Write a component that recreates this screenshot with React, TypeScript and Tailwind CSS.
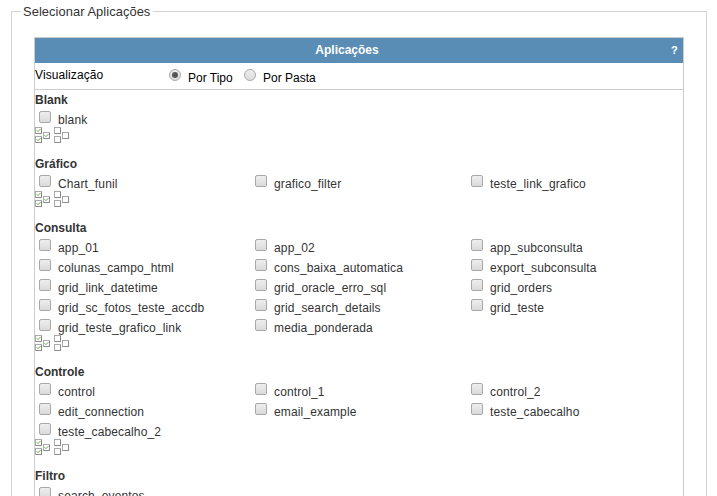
import React from 'react';

type Group = { title: string; items: string[] };

const groups: Group[] = [
  { title: 'Blank', items: ['blank'] },
  { title: 'Gráfico', items: ['Chart_funil', 'grafico_filter', 'teste_link_grafico'] },
  {
    title: 'Consulta',
    items: [
      'app_01', 'app_02', 'app_subconsulta',
      'colunas_campo_html', 'cons_baixa_automatica', 'export_subconsulta',
      'grid_link_datetime', 'grid_oracle_erro_sql', 'grid_orders',
      'grid_sc_fotos_teste_accdb', 'grid_search_details', 'grid_teste',
      'grid_teste_grafico_link', 'media_ponderada',
    ],
  },
  {
    title: 'Controle',
    items: [
      'control', 'control_1', 'control_2',
      'edit_connection', 'email_example', 'teste_cabecalho',
      'teste_cabecalho_2',
    ],
  },
  { title: 'Filtro', items: ['search_eventos'] },
];

const boxes = [[0, 0], [0, 9], [8, 5]];

function BoxesIcon({ checked }: { checked?: boolean }) {
  return (
    <svg width="16" height="16" viewBox="0 0 16 16" className="block shrink-0">
      {boxes.map(([x, y]) => (
        <g key={`${x}-${y}`} transform={`translate(${x} ${y})`}>
          <rect x="0.5" y="0.5" width="6" height="6" fill="#fff" stroke="#999" />
          <path d="M0.5 7V0.5H7" fill="none" stroke="#aaa" />
          <path d="M6.5 1V6.5H1" fill="none" stroke="#8a8a8a" />
          {checked && <path d="M1.6 3.2 3 4.6 5.6 2" fill="none" stroke="#4f9c26" strokeWidth="0.85" />}
        </g>
      ))}
    </svg>
  );
}

function CheckBox() {
  return (
    <span
      role="checkbox"
      aria-checked="false"
      className="mt-[2px] h-[12px] w-[12px] shrink-0 rounded-[2px] border border-[#a8a8a8] bg-linear-to-b from-[#eeeeee] to-[#dadada]"
    />
  );
}

function Radio({ checked }: { checked?: boolean }) {
  return (
    <span
      role="radio"
      aria-checked={!!checked}
      className="flex h-3 w-3 shrink-0 items-center justify-center rounded-full border border-[#a9a9a9] bg-linear-to-b from-[#ededed] to-[#dcdcdc]"
    >
      {checked && <span className="h-1.5 w-1.5 rounded-full bg-[#555]" />}
    </span>
  );
}

function GroupBlock({ title, items }: Group) {
  return (
    <section className="mb-[6px]">
      <h2 className="h-[19px] pt-[2px] leading-4 font-bold">{title}</h2>
      <div className="grid grid-cols-[216px_216px_216px]">
        {items.map((item) => (
          <label key={item} className="flex h-5 pl-1">
            <CheckBox />
            <span className="ml-[7px] pt-[3px] leading-4 tracking-[0.14px]">{item}</span>
          </label>
        ))}
      </div>
      <div className="-mt-[2px] flex h-[21px] gap-[3px]">
        <BoxesIcon checked />
        <BoxesIcon />
      </div>
    </section>
  );
}

export default function App() {
  return (
    <div className="h-[496px] w-[717px] overflow-hidden bg-white font-['Liberation_Sans',Arial,sans-serif] text-[12px] text-[#333]">
      <fieldset className="mt-[3px] ml-[11px] h-[520px] w-[696px] border border-[#d3d3d3] pl-[9px]">
        <legend className="h-[16px] pr-[3px] pl-[2px] text-[12.9px] leading-[18px] tracking-[0.06px]">Selecionar Aplicações</legend>
        <div className="mt-[18px] ml-[13px] w-[650px] border border-[#ccc]">
          <header className="flex h-[25px] items-center bg-[#5a8db6] font-bold text-white">
            <span className="-mt-px flex-1 text-center">Aplicações</span>
            <span className="-mt-px w-6 pl-[12px] text-[11px]">?</span>
          </header>
          <div className="flex h-[27px] border-b border-[#ccc] text-black">
            <span className="w-[134px] pt-1 leading-4 tracking-[0.1px]">Visualização</span>
            <span className="flex pt-[6px]"><Radio checked /></span>
            <span className="ml-[7px] w-[56px] pt-[7px] leading-4">Por Tipo</span>
            <span className="flex pt-[6px]"><Radio /></span>
            <span className="ml-[7px] pt-[7px] leading-4">Por Pasta</span>
          </div>
          {groups.map((g) => (
            <GroupBlock key={g.title} {...g} />
          ))}
        </div>
      </fieldset>
    </div>
  );
}
